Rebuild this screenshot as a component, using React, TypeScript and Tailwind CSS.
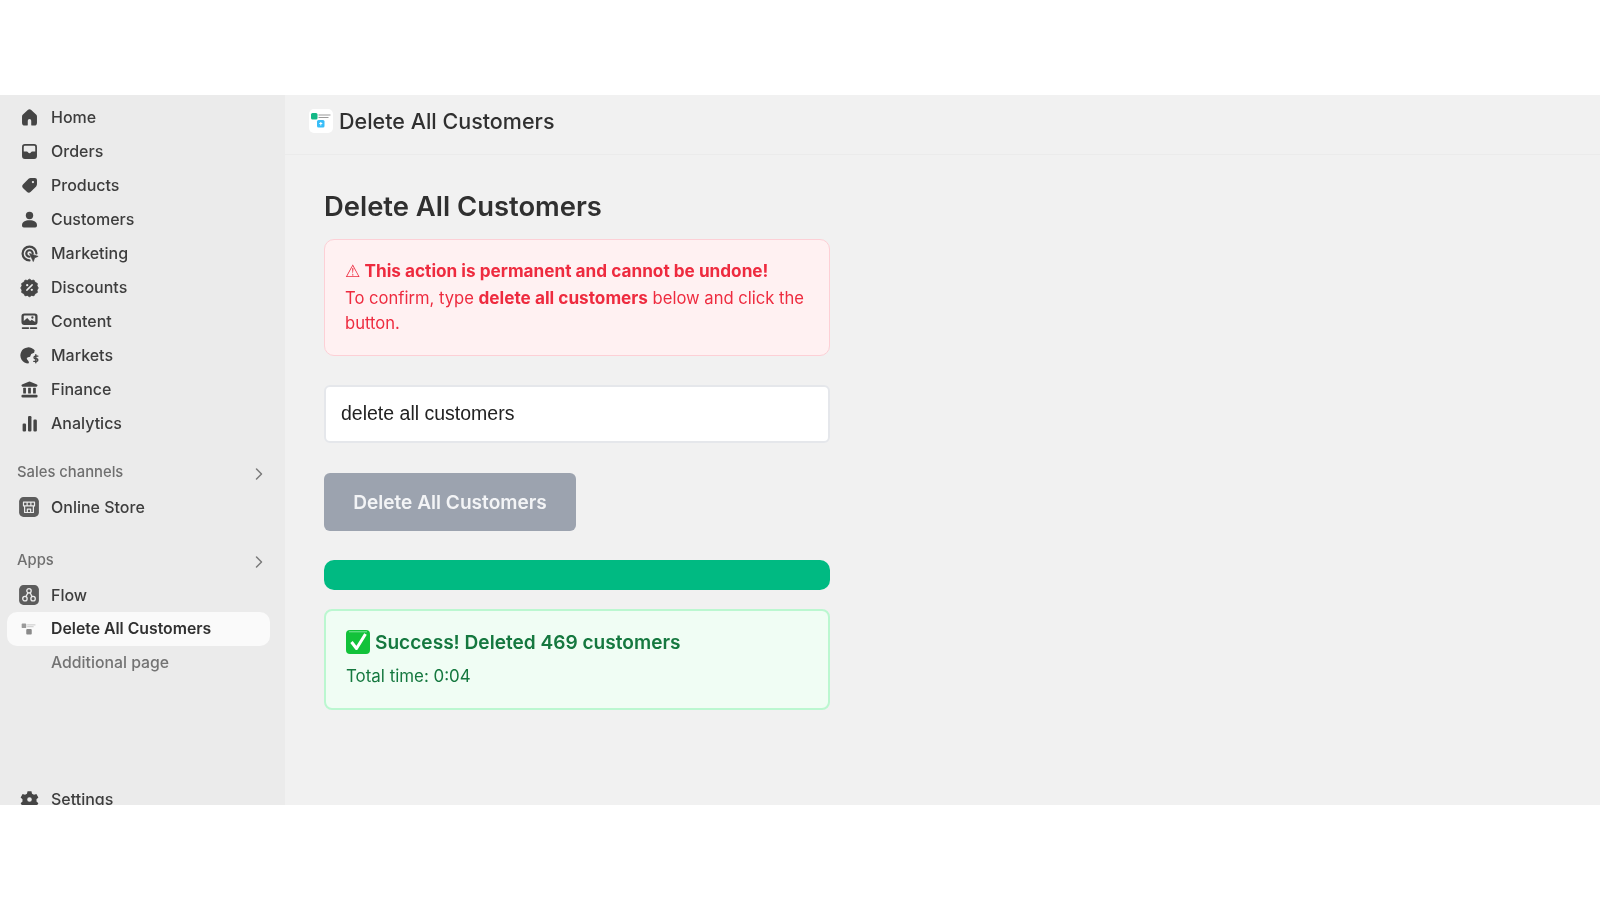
import React from 'react';

const ink = '#454545';

function Ico({ children, tile }: { children: React.ReactNode; tile?: boolean }) {
  return (
    <svg viewBox="0 0 20 20" className={tile ? 'w-[22px] h-[22px] shrink-0' : 'w-[23px] h-[23px] -mx-[0.5px] shrink-0'} fill={ink}>
      {children}
    </svg>
  );
}

const icons: Record<string, React.ReactNode> = {
  Home: <Ico><path d="M8.500 3.500a2.200 2.200 0 0 1 3 0l4.200 3.900c.5.4.8 1 .8 1.700v5.400a2.500 2.500 0 0 1-2.500 2.500h-1.700a.8.8 0 0 1-.8-.8v-3.400a1.500 1.500 0 0 0-3 0v3.400a.8.8 0 0 1-.8.8H6a2.500 2.500 0 0 1-2.500-2.500V9.100c0-.7.3-1.300.8-1.700z" /></Ico>,
  Orders: <Ico><path fillRule="evenodd" d="M6 3.500h8A2.500 2.500 0 0 1 16.500 6v8a2.500 2.500 0 0 1-2.500 2.500H6A2.500 2.500 0 0 1 3.500 14V6A2.500 2.500 0 0 1 6 3.500zM5 10h2.600c.5 0 .9.300 1.100.7.3.5.8.8 1.300.8s1-.3 1.300-.8c.2-.4.600-.7 1.100-.7H15V6a1 1 0 0 0-1-1H6a1 1 0 0 0-1 1z" /></Ico>,
  Products: <Ico><path fillRule="evenodd" d="M11 3.500h3.700a1.800 1.800 0 0 1 1.800 1.800V9c0 .7-.3 1.300-.7 1.800l-4.700 4.700a2.400 2.400 0 0 1-3.400 0l-3.200-3.200a2.400 2.400 0 0 1 0-3.400l4.700-4.700c.5-.4 1.100-.7 1.800-.7zM13 8a1 1 0 1 0 0-2 1 1 0 0 0 0 2z" /></Ico>,
  Customers: <Ico><circle cx="10" cy="6.500" r="3.200" /><path d="M3.500 14.800c0-2.400 2.600-4.100 6.500-4.100s6.500 1.700 6.500 4.100v.7a1.500 1.500 0 0 1-1.500 1.500H5a1.500 1.500 0 0 1-1.500-1.500z" /></Ico>,
  Marketing: <Ico>
    <path d="M10 16a6 6 0 1 1 6-6M10 12.800a2.800 2.800 0 1 1 2.800-2.800" fill="none" stroke={ink} strokeWidth="1.900" strokeLinecap="round" />
    <path d="M10 10l7.500 2.500-3 1.200-1.200 3.300z" stroke={ink} strokeWidth=".6" strokeLinejoin="round" />
  </Ico>,
  Discounts: <Ico>
    <path d="M10 2.800l1.800 1.100 2.100-.3 1 1.900 1.900 1-.3 2.100 1.100 1.800-1.100 1.800.3 2.100-1.900 1-1 1.900-2.100-.3-1.800 1.100-1.800-1.100-2.100.3-1-1.900-1.900-1 .3-2.100-1.100-1.800 1.100-1.800-.3-2.100 1.900-1 1-1.900 2.100.3z" stroke={ink} strokeWidth=".8" strokeLinejoin="round" />
    <path d="M12.300 7.700l-4.600 4.600" stroke="#ebebeb" strokeWidth="1.300" strokeLinecap="round" />
    <circle cx="8" cy="8" r="1" fill="#ebebeb" /><circle cx="12" cy="12" r="1" fill="#ebebeb" />
  </Ico>,
  Content: <Ico>
    <path fillRule="evenodd" d="M5.500 3h9A2.500 2.500 0 0 1 17 5.500v5a2.500 2.500 0 0 1-2.500 2.500h-9A2.500 2.500 0 0 1 3 10.500v-5A2.500 2.500 0 0 1 5.500 3zM5 9.500l3-2.500 2.500 2.500 1.500-1 3 2V5.500a.8.8 0 0 0-.8-.8H5.800a.8.8 0 0 0-.8.8z" />
    <circle cx="12.500" cy="6.500" r="1" />
    <path d="M4 15.700h5M11 15.700h5" stroke={ink} strokeWidth="1.500" strokeLinecap="round" />
  </Ico>,
  Markets: <Ico>
    <path d="M14.500 5.500A7 7 0 1 0 9 16.900c.8-.5.6-1.500 0-2.200l-1-1.300c-.7-.8-.2-1.700.8-1.900l1.700-.4 1-2.500 2.500-1.100z" />
    <path d="M17.300 10.500h-2.200a1.150 1.150 0 0 0 0 2.300h1a1.150 1.150 0 0 1 0 2.300h-2.400M15.500 9.300v7" fill="none" stroke={ink} strokeWidth="1.200" strokeLinecap="round" />
  </Ico>,
  Finance: <Ico>
    <path d="M9.300 3.200a1.800 1.800 0 0 1 1.400 0l5.800 2.500c.8.300.5 1.800-.4 1.800H3.900c-.9 0-1.200-1.500-.4-1.800z" />
    <rect x="4.500" y="8.500" width="2.400" height="5" rx=".5" /><rect x="8.800" y="8.500" width="2.400" height="5" rx=".5" /><rect x="13.100" y="8.500" width="2.400" height="5" rx=".5" />
    <rect x="3" y="14.500" width="14" height="2.500" rx="1" />
  </Ico>,
  Analytics: <Ico>
    <rect x="4" y="10" width="3" height="7" rx="1" /><rect x="8.700" y="3.500" width="3" height="13.500" rx="1" /><rect x="13.400" y="6.500" width="3" height="10.500" rx="1" />
  </Ico>,
  'Online Store': <Ico tile>
    <rect x="1" y="1" width="18" height="18" rx="4" fill="#5c5c5c" />
    <path d="M5 5.500h10v3.500H5zM6 9v6h8V9M8.500 15v-3h3v3M8.300 5.500V9M11.700 5.500V9" fill="none" stroke="#ebebeb" strokeWidth="1.100" strokeLinejoin="round" />
  </Ico>,
  Flow: <Ico tile>
    <rect x="1" y="1" width="18" height="18" rx="4" fill="#5c5c5c" />
    <g fill="none" stroke="#ebebeb" strokeWidth="1.200">
      <circle cx="10" cy="6.200" r="2" /><circle cx="6.300" cy="13.300" r="2" /><circle cx="13.700" cy="13.300" r="2" />
      <path d="M9 8l-1.800 3.500M11 8l1.800 3.500" />
    </g>
  </Ico>,
  Settings: <Ico>
    <path fillRule="evenodd" d="M8.300 2.800h3.400l.5 2.100 1.700 1 2.100-.6 1.700 2.900-1.600 1.500v2l1.600 1.500-1.700 2.900-2.100-.6-1.700 1-.5 2.100H8.300l-.5-2.100-1.700-1-2.100.6-1.700-2.900 1.600-1.500v-2L2.300 8.200 4 5.300l2.100.6 1.700-1zM10 12a2 2 0 1 0 0-4 2 2 0 0 0 0 4z" />
  </Ico>,
};

// the app's little logo, in colour at the top and grey in the nav
function AppLogo({ grey }: { grey?: boolean }) {
  if (grey) {
    return (
      <svg viewBox="0 0 24 24" className="w-[22px] h-[22px] shrink-0">
        <rect x="4" y="6" width="5" height="5" rx="1" fill="#9a9a9a" />
        <path d="M10 7.500h9M10 9.500h7" stroke="#c4c4c4" strokeWidth="1" />
        <rect x="9" y="12" width="6" height="6" rx="1" fill="#8a8a8a" />
      </svg>
    );
  }
  return (
    <svg viewBox="0 0 24 24" className="w-[24px] h-[24px]">
      <rect x="2" y="4" width="6.500" height="6.500" rx="1.500" fill="#14b886" />
      <path d="M9.500 6h12M9.500 8.500h10" stroke="#9a9a9a" strokeWidth="1.200" />
      <rect x="8" y="11" width="7.500" height="7.500" rx="1.500" fill="#38bdf8" />
      <path d="M11.800 13v3.500M10.300 14.500h3" stroke="#fff" strokeWidth="1" />
    </svg>
  );
}

function NavRow({ name }: { name: string }) {
  return (
    <div className="h-[34px] shrink-0 flex items-center gap-[11px] pl-[18px] text-[16px] font-medium text-[#3d3d3d]">
      {icons[name]}
      <span>{name}</span>
    </div>
  );
}

function SectionLabel({ label }: { label: string }) {
  return (
    <div className="h-[34px] shrink-0 flex items-center justify-between pl-[17px] pr-[21px] text-[14.8px] font-medium text-[#6f6f6f]">
      <span className="-mt-[2px]">{label}</span>
      <svg viewBox="0 0 10 14" className="w-[10px] h-[14px] mt-[2px]" fill="none" stroke="#7a7a7a" strokeWidth="1.500" strokeLinecap="round" strokeLinejoin="round">
        <path d="M2.500 2l5 5-5 5" />
      </svg>
    </div>
  );
}

export default function App() {
  const main = ['Home', 'Orders', 'Products', 'Customers', 'Marketing', 'Discounts', 'Content', 'Markets', 'Finance', 'Analytics'];

  return (
    <div className="w-[1600px] h-[900px] bg-white pt-[95px] overflow-hidden blur-[0.4px]" style={{ fontFamily: 'Inter, "Noto Sans", sans-serif' }}>
      <div className="h-[710px] flex overflow-hidden bg-[#f1f1f1]">
        {/* Sidebar */}
        <aside className="w-[285px] shrink-0 bg-[#ebebeb] flex flex-col pt-[5px]">
          {main.map(n => <NavRow key={n} name={n} />)}
          <div className="h-[16px] shrink-0" />
          <SectionLabel label="Sales channels" />
          <NavRow name="Online Store" />
          <div className="h-[20px] shrink-0" />
          <SectionLabel label="Apps" />
          <NavRow name="Flow" />
          <div className="ml-[7px] mr-[15px] h-[34px] shrink-0 flex items-center gap-[11px] pl-[11px] rounded-[10px] bg-[#fafafa] text-[15.8px] font-semibold text-[#303030]">
            <AppLogo grey />
            <span>Delete All Customers</span>
          </div>
          <div className="h-[34px] shrink-0 flex items-center pl-[51px] text-[15.8px] font-medium text-[#737373]">Additional page</div>
          <div className="flex-1" />
          <div className="-mb-[11px]"><NavRow name="Settings" /></div>
        </aside>

        {/* Main */}
        <main className="flex-1 flex flex-col">
          <header className="h-[60px] shrink-0 border-b border-[#ebebeb] flex items-center pl-[24px] pb-[7px] gap-[6px]">
            <div className="w-[24px] h-[24px] rounded-[5px] bg-white flex items-center justify-center overflow-hidden">
              <AppLogo />
            </div>
            <span className="text-[21.5px] font-medium text-[#303030]">Delete All Customers</span>
          </header>

          <div className="w-[506px] ml-[39px] pt-[33px] flex flex-col">
            <h1 className="text-[27.4px] leading-[36px] font-semibold text-[#303030] mb-[15px]">Delete All Customers</h1>

            <div className="h-[117px] rounded-[10px] border-[1.5px] border-[#fdd0d6] bg-[#fff1f2] pl-[20px] pr-[18px] pt-[18px] text-[16.6px] leading-[25.5px] text-[#ee2b3f]">
              <div className="font-bold text-[17.2px]">
                <span className="font-normal" style={{ fontFamily: '"DejaVu Sans", sans-serif' }}>⚠</span> This action is permanent and cannot be undone!
              </div>
              <div>To confirm, type <strong className="font-bold text-[17.2px]">delete all customers</strong> below and click the button.</div>
            </div>

            <input
              readOnly
              value="delete all customers"
              className="mt-[29px] w-full h-[58px] rounded-[6px] border-2 border-[#e5e7eb] bg-white px-[15px] pb-[1px] text-[19.5px] text-[#222] outline-none"
              style={{ fontFamily: '"Liberation Sans", Arial, sans-serif' }}
            />

            <button className="mt-[30px] w-[252px] h-[58px] rounded-[6px] bg-[#9ca3af] text-[19.1px] font-semibold text-[#f3f4f6]">Delete All Customers</button>

            <div className="mt-[29px] h-[30px] rounded-[10px] bg-[#00ba82]" />

            <div className="mt-[19px] h-[101px] rounded-[8px] border-2 border-[#bbf7d0] bg-[#f0fdf4] px-[20px] pt-[18px] text-[#15783f]">
              <div className="flex items-center gap-[5px] h-[26px] text-[19.1px] font-semibold">
                <svg viewBox="0 0 24 24" className="w-[24px] h-[24px] shrink-0">
                  <rect x="0" y="0" width="24" height="24" rx="4" fill="#12c23a" />
                  <path d="M3 1.800h18" stroke="#7fe59a" strokeWidth="1" />
                  <path d="M5.500 12l5 6.500L19.500 4" fill="none" stroke="#fff" strokeWidth="3" strokeLinejoin="round" />
                </svg>
                <span>Success! Deleted 469 customers</span>
              </div>
              <div className="mt-[9px] text-[16.9px] leading-[24px] font-normal">Total time: 0:04</div>
            </div>
          </div>
        </main>
      </div>
    </div>
  );
}
